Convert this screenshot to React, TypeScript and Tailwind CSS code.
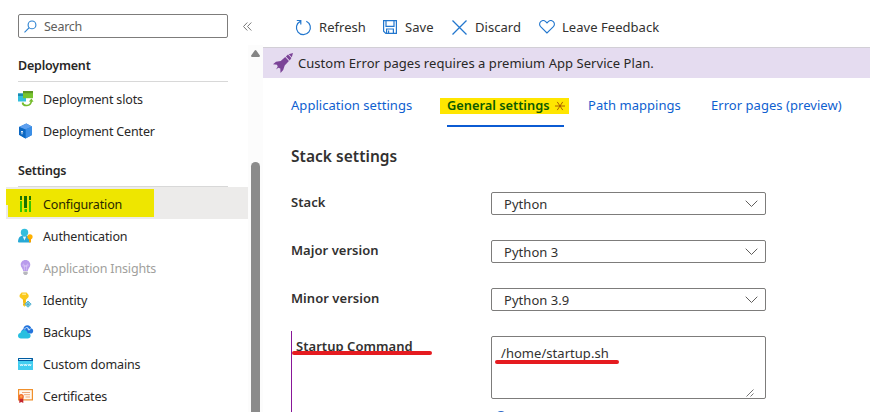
import type { ReactNode } from "react";

function SlotsIcon() {
  return (
    <svg width="16" height="16" viewBox="0 0 16 16">
      <rect x="0" y="2.5" width="8" height="8" fill="#32bedd" />
      <rect x="0" y="2.5" width="8" height="2.5" fill="#198ab3" />
      <rect x="5" y="0" width="10" height="7.2" fill="#76c42e" />
      <rect x="5" y="0" width="10" height="2.200" fill="#5e9624" />
      <path d="M4.5 11.5c.6 4 8.2 4.500 8.900-1.500" fill="none" stroke="#76bc2d" strokeWidth="1.700" />
      <path d="M10.800 10.600l2.700-3 2 3.200z" fill="#76bc2d" />
    </svg>
  );
}

function CubeIcon() {
  return (
    <svg width="16" height="16" viewBox="0 0 16 16">
      <path d="M1 4L8.300.5 14 3.500v8.400L7.500 15.500 1 11.800z" fill="#1f79d2" />
      <path d="M1 4L8.300.5 14 3.500 7.500 6.600z" fill="#5ea0ef" />
      <path d="M7.500 6.600L14 3.500v8.400l-6.500 3.600z" fill="#3b8ee6" />
      <path d="M1 4l6.500 2.600v8.900L1 11.800z" fill="#0b67c2" />
      <path d="M4 8v3.300M3.200 9.200L4 8l.8 1.200" fill="none" stroke="#fff" strokeWidth=".9" />
    </svg>
  );
}

function BarsIcon() {
  return (
    <svg width="16" height="16" viewBox="0 0 16 16">
      <rect x="2" y="0" width="2" height="4" fill="#1a7300" />
      <rect x="2" y="5" width="2" height="11" fill="#35c500" />
      <rect x="6" y="0" width="3" height="12" fill="#1a7300" />
      <rect x="6.500" y="13" width="2.500" height="3" fill="#35c500" />
      <rect x="11" y="0" width="2" height="4" fill="#1a7300" />
      <rect x="11" y="5" width="2" height="11" fill="#35c500" />
    </svg>
  );
}

function UserIcon() {
  return (
    <svg width="16" height="16" viewBox="0 0 16 16">
      <path d="M0 13.500C.3 9 2.500 7.500 6.500 7.500s6 1.500 6.300 6c0 .6-.6 1-1.300 1H1.300c-.8 0-1.300-.4-1.300-1z" fill="#27a9d6" />
      <path d="M4.800 8.500h3.400l-1.700 4z" fill="#e8f8fd" />
      <circle cx="6.500" cy="4.500" r="3.700" fill="#32bedd" />
      <circle cx="12" cy="8.800" r="2.600" fill="#ffb100" />
      <path d="M11 10.500h2v3.300l-1 1.200-1-1.200z" fill="#f5a300" />
    </svg>
  );
}

function BulbIcon() {
  return (
    <svg width="16" height="16" viewBox="0 0 16 16">
      <path d="M7.500 0C4.500 0 2.700 2.200 2.700 4.800c0 2.700 2.200 3.500 2.500 6.200h4.600c.3-2.700 2.500-3.500 2.500-6.200C12.300 2.200 10.500 0 7.500 0z" fill="#b99bec" />
      <path d="M6.400 10.500V6M8.600 10.500V6M4.800 5.200c0-1.500 1.700-1.200 1.600.8h2.200c-.1-2 1.600-2.300 1.600-.8 0 .8-.8.8-1.600.8H6.400c-.8 0-1.600 0-1.600-.8z" fill="none" stroke="#dccbf8" strokeWidth=".7" />
      <path d="M5.300 11.500h4.400v2l-1.200 1.500h-2l-1.200-1.500z" fill="#b7b7bd" />
    </svg>
  );
}

function KeyIcon() {
  return (
    <svg width="16" height="16" viewBox="0 0 16 16">
      <path d="M1.600 3L3.600.5h5l2 2.500v2L8 7.700v5.600L6.500 14.800 5 13.300v-1.200l.8-.9-.8-.9V7.700L1.600 5z" fill="#fbc81c" />
      <path d="M4.200 2.200h3.800" stroke="#fff0a8" strokeWidth="1.200" />
      <path d="M6 7.500v5.500" stroke="#e79b00" strokeWidth=".7" />
      <path d="M10 9l3.200 3.200L10 15.200 6.800 12.200z" fill="#8ed6ea" stroke="#4faecb" strokeWidth=".9" strokeLinejoin="round" />
      <path d="M10 10.500v3.500M8.500 12.300h3" stroke="#3490b5" strokeWidth=".6" />
    </svg>
  );
}

function BackupIcon() {
  return (
    <svg width="16" height="16" viewBox="0 0 16 16">
      <path d="M5 9.500C2.500 8 4 5.500 5.300 5.300 5.500 2.500 7.300 1.300 9.300 1.300c2.200 0 3.700 1.300 4 3.200 1.200.3 1.900 1.200 1.900 2.400 0 1.600-1.200 2.600-2.700 2.600z" fill="#2374dc" />
      <path d="M6.800 5.500c0-2.700 4.200-2.700 4.200.2M9.500 4.500l1.500 1.800 1.600-1.800" fill="none" stroke="#d7ebff" strokeWidth="1" />
      <path d="M3 14.500c-1.700 0-3-1.100-3-2.800 0-1.500 1-2.500 2.400-2.700C2.700 7.200 4.200 6.100 6 6.100c2 0 3.300 1.200 3.700 2.900 1.700 0 2.900 1.100 2.900 2.700 0 1.700-1.300 2.800-2.900 2.800z" fill="#27bfe0" />
    </svg>
  );
}

function DomainIcon() {
  return (
    <svg width="16" height="16" viewBox="0 0 16 16">
      <rect x="0" y="2" width="15" height="12" rx=".6" fill="#42cdf0" />
      <path d="M0 2.600c0-.4.200-.6.600-.6h13.800c.4 0 .6.200.6.600V5H0z" fill="#005ba1" />
      <rect x="1" y="3" width="12.500" height="1" fill="#e8f6ff" />
      <path d="M2 8l.8 2 .8-2 .8 2 .8-2M6 8l.8 2 .7-2 .8 2 .8-2M10 8l.8 2 .8-2 .8 2 .7-2" fill="none" stroke="#e8fbff" strokeWidth=".8" />
    </svg>
  );
}

function CertificateIcon() {
  return (
    <svg width="16" height="16" viewBox="0 0 16 16">
      <rect x=".6" y="1.600" width="13.800" height="10.300" fill="#fff8f0" stroke="#f0902c" strokeWidth="1.200" />
      <path d="M4 4.500h8M6 6.700h6M7.500 9h4.500" stroke="#f0a878" strokeWidth="1" />
      <path d="M1.300 9.500h4v5.500l-2-1-2 1z" fill="#c4262e" />
      <circle cx="3.200" cy="8.500" r="2.600" fill="#f2692c" />
      <circle cx="3.200" cy="8.500" r="1.200" fill="#ffa34d" />
    </svg>
  );
}

function NavItem({ icon, children, textClass = "text-[#292827]" }: { icon: ReactNode; children: ReactNode; textClass?: string }) {
  return (
    <li className="flex h-8 items-center gap-[9px] pl-[18px]">
      {icon}
      <span className={`pt-[2px] tracking-[-0.15px] ${textClass}`}>{children}</span>
    </li>
  );
}

function Sidebar() {
  return (
    <aside className="w-[248px] shrink-0">
      <div className="flex h-[53px] items-start pt-[14px] pl-[18px]">
        <div className="flex h-6 w-[210px] shrink-0 items-center gap-[7px] rounded-[2px] border border-[#7d7c7b] pl-[5px] text-[#605e5c]">
          <svg width="13" height="13" viewBox="0 0 13 13" fill="none" stroke="#2a80d0" strokeWidth="1.100">
            <circle cx="8" cy="4.900" r="3.900" />
            <path d="M5.200 7.700L.5 12.400" />
          </svg>
          <span className="pt-[2px] tracking-[-0.25px]">Search</span>
        </div>
        <svg className="mt-[8px] ml-[15px] shrink-0" width="9" height="9" viewBox="0 0 9 9" fill="none" stroke="#777" strokeWidth="1">
          <path d="M4.300.5l-3.800 4 3.800 4M8.300.5l-3.800 4 3.800 4" />
        </svg>
      </div>
      <h2 className="ml-[18px] h-[29px] w-[210px] border-b border-[#d8d8d8] pt-[5px] text-[12.500px] font-semibold tracking-[-0.2px] text-[#292827]">
        Deployment
      </h2>
      <ul className="pt-[1px]">
        <NavItem icon={<SlotsIcon />}>Deployment slots</NavItem>
        <NavItem icon={<CubeIcon />}>Deployment Center</NavItem>
      </ul>
      <h2 className="ml-[18px] h-10 w-[210px] border-b border-[#d8d8d8] pt-[16px] text-[12.500px] font-semibold tracking-[-0.2px] text-[#292827]">
        Settings
      </h2>
      <div className="relative ml-[6px] h-8 bg-[#ecebea]">
        <div className="absolute top-[2px] left-0 h-4 w-[148px] bg-[#eee600]" />
        <div className="absolute top-[2px] left-[2px] h-7 w-[146px] bg-[#eee600]" />
        <div className="relative flex h-8 items-center gap-[9px] pt-[2px] pl-3">
          <BarsIcon />
          <span className="pt-[2px] tracking-[-0.15px] text-[#292800]">Configuration</span>
        </div>
      </div>
      <ul className="pt-px">
        <NavItem icon={<UserIcon />}>Authentication</NavItem>
        <NavItem icon={<BulbIcon />} textClass="text-[#a19f9d]">Application Insights</NavItem>
        <NavItem icon={<KeyIcon />}>Identity</NavItem>
        <NavItem icon={<BackupIcon />}>Backups</NavItem>
        <NavItem icon={<DomainIcon />}>Custom domains</NavItem>
        <NavItem icon={<CertificateIcon />}>Certificates</NavItem>
      </ul>
    </aside>
  );
}

function Toolbar() {
  return (
    <div className="flex h-[47px] items-center pt-[7px] pl-8 text-[#323130]">
      <svg width="17" height="17" viewBox="0 0 17 17" fill="none" stroke="#2377ce" strokeWidth="1.200">
        <path d="M11.300 2.300a7 7 0 1 1-6 .1M1.800 1.500h4v4" />
      </svg>
      <span className="ml-[7px] w-[64px]">Refresh</span>
      <svg width="14" height="14" viewBox="0 0 14 14" fill="none" stroke="#2377ce" strokeWidth="1.200">
        <path d="M.6.6h12.800v12.800H2.800L.6 11.200zM3 .6v5.800h8V.6M3.600 13.400V9h6.800v4.400M5.600 10.500v2.900" />
      </svg>
      <span className="ml-[8px] w-[47px]">Save</span>
      <svg width="15" height="15" viewBox="0 0 15 15" fill="none" stroke="#2377ce" strokeWidth="1.300">
        <path d="M.5.500l14 14M14.500.500L.500 14.500" />
      </svg>
      <span className="ml-[8px] w-[64px]">Discard</span>
      <svg width="16" height="14" viewBox="0 0 16 14" fill="none" stroke="#2377ce" strokeWidth="1.100">
        <path d="M8 13L1.600 6.700C.2 5.200.3 3 1.700 1.700 3.200.3 5.400.4 6.700 1.700L8 3l1.300-1.300C10.600.4 12.800.3 14.300 1.700c1.400 1.300 1.500 3.500.1 5z" />
      </svg>
      <span className="ml-[7px]">Leave Feedback</span>
    </div>
  );
}

function Banner() {
  return (
    <div className="flex h-[31px] items-center border-t border-[#d2cfd6] bg-[#e5dcf0] pl-[10px] text-[#292827]">
      <svg width="20" height="20" viewBox="0 0 20 20" fill="#7b4397">
        <path d="M20 0l-1.200 4.300-3.100-3.100zM15 1.600l3.400 3.400-1.700 2.500-3.800-3.900zM12.200 4.100l3.700 3.800-4.200 4.600-1.500 4.600-2.700 2.900-.2-4.500-2-.7-2.200 1.700 1.600-3-.7-1.800L0 11.200l3-2.500 4.700-.8z" />
      </svg>
      <span className="ml-[5px]">Custom Error pages requires a premium App Service Plan.</span>
    </div>
  );
}

function Tabs() {
  return (
    <nav className="flex h-[49px] items-start pt-[20px] pl-[28px] text-[#0f5fd0]">
      <span className="mt-[-3px] w-[149px] leading-5">Application settings</span>
      <div className="w-[129px]">
        <div className="flex h-4 items-center gap-[5px] bg-[#ffe600] pl-[7px]">
          <span className="w-[103px] pb-[2px] text-[12.800px] font-semibold tracking-normal whitespace-nowrap text-[#0b5a00]">
            General settings
          </span>
          <svg width="10" height="10" viewBox="0 0 11 10" stroke="#a35200" strokeWidth="1">
            <path d="M0 5h11M2.500.5l6 9M8.500.5l-6 9" />
          </svg>
        </div>
        <div className="mt-[11px] ml-[7px] h-[2px] w-[117px] bg-[#0b5bd3]" />
      </div>
      <span className="mt-[-3px] ml-[19px] w-[123px] leading-5">Path mappings</span>
      <span className="mt-[-3px] leading-5">Error pages (preview)</span>
    </nav>
  );
}

function SelectRow({ label, value }: { label: string; value: string }) {
  return (
    <div className="flex h-12">
      <div className="w-[200px] pt-px leading-[18px] font-semibold">{label}</div>
      <div className="flex h-[23px] w-[275px] items-center justify-between rounded-[2px] border border-[#7d7c7b] pr-[7px] pl-3">
        <span>{value}</span>
        <svg width="13" height="8" viewBox="0 0 13 8" fill="none" stroke="#605e5c" strokeWidth="1">
          <path d="M.7.700l5.800 5.800 5.800-5.800" />
        </svg>
      </div>
    </div>
  );
}

function StartupRow() {
  return (
    <div className="flex">
      <div className="relative mt-[-5px] h-[81px] w-[200px] border-l border-[#881798] pt-[5px] pl-1">
        <div className="leading-5 font-semibold">Startup Command</div>
        <div className="absolute top-5 left-0 h-1 w-[140px] rounded-full bg-[#e51b20]" />
      </div>
      <div>
        <div className="relative h-[63px] w-[275px] rounded-[2px] border border-[#7d7c7b] pt-[6px] pl-[9px] leading-5">
          /home/startup.sh
          <div className="absolute top-[23px] left-[3px] h-1 w-[124px] rounded-full bg-[#e51b20]" />
          <svg className="absolute right-[11px] bottom-px" width="8" height="8" viewBox="0 0 8 8" stroke="#666" strokeWidth=".9">
            <path d="M.5 7.500l7-7M4.500 7.500l3-3" />
          </svg>
        </div>
        <div className="mt-3 ml-1 size-3 rounded-full bg-[#2664c8]" />
      </div>
    </div>
  );
}

export default function App() {
  return (
    <div className="flex h-[412px] w-[870px] overflow-hidden bg-white font-['Noto_Sans','Open_Sans',sans-serif] text-[12.500px] leading-4 whitespace-nowrap">
      <Sidebar />
      <div className="mt-[45px] flex h-[367px] w-[15px] shrink-0 flex-col items-center bg-[#fcfcfc] pt-[5px]">
        <svg width="9" height="7" viewBox="0 0 9 7" fill="#858585">
          <path d="M3.700.6L0 5.800C0 6.500.3 7 1 7h7c.7 0 1-.5 1-1.200L5.300.6c-.4-.8-1.200-.8-1.600 0z" />
        </svg>
        <div className="mt-[105px] w-[9px] flex-1 rounded-t-full bg-[#8b8b8b]" />
      </div>
      <main className="flex-1 text-[13px] tracking-[0.04px]">
        <Toolbar />
        <Banner />
        <Tabs />
        <section className="pl-[28px] text-[#323130]">
          <h1 className="h-[65px] pt-[19px] text-[15.500px] leading-5 font-semibold">Stack settings</h1>
          <SelectRow label="Stack" value="Python" />
          <SelectRow label="Major version" value="Python 3" />
          <SelectRow label="Minor version" value="Python 3.9" />
          <StartupRow />
        </section>
      </main>
    </div>
  );
}
